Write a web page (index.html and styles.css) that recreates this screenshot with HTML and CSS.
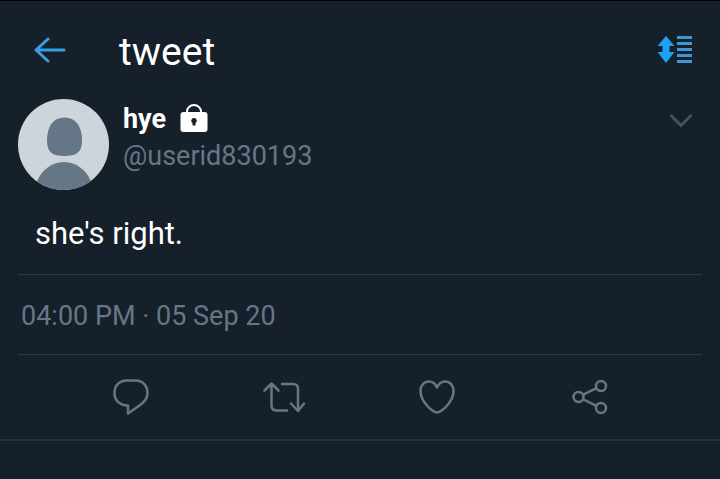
FILE: index.html
```html
<!DOCTYPE html>
<html lang="en">
<head>
    <meta charset="utf-8">
    <title>tweet</title>
    <link rel="stylesheet" href="styles.css">
</head>
<body>
    <header class="topbar">
        <button class="icon-button" aria-label="Back">
            <svg width="32" height="26" viewBox="0 0 32 26" fill="none" stroke="#38a0e3" stroke-width="3" stroke-linecap="round" stroke-linejoin="round">
                <path d="M14 2L2 13l12 11M2 13h28"/>
            </svg>
        </button>
        <h1>tweet</h1>
        <button class="icon-button" aria-label="Sort replies">
            <svg width="36" height="28" viewBox="0 0 36 28">
                <path d="M9 0l8.500 10h-5v6h5L9 27 .5 16h5v-6h-5z" fill="#1da1f2"/>
                <path d="M20 0h15v3H20zM20 6h15v3H20zM20 12h15v3H20zM20 18h15v3H20zM20 24h15v3H20z" fill="#3d97d3"/>
            </svg>
        </button>
    </header>

    <main>
        <article>
            <div class="author">
                <svg class="avatar" width="91" height="91" viewBox="0 0 91 91">
                    <clipPath id="round"><circle cx="45.500" cy="45.500" r="45.500"/></clipPath>
                    <g clip-path="url(#round)">
                        <path d="M0 0h91v91H0z" fill="#ccd6da"/>
                        <path d="M46.500 18.500c11 0 17.500 8.500 17.500 23 0 11.500-5 15.500-17.500 15.500S29 53 29 41.500c0-14.500 6.500-23 17.500-23z" fill="#657786"/>
                        <path d="M17 91c2-17 15-28 29-28s27 11 29 28z" fill="#657786"/>
                    </g>
                </svg>
                <div class="names">
                    <div class="name">
                        <span>hye</span>
                        <svg width="28" height="28" viewBox="0 0 28 28">
                            <path d="M7 9V7.500a7 6.500 0 0 1 14 0V9" fill="none" stroke="#fff" stroke-width="2"/>
                            <rect x="0.500" y="8" width="27" height="20" rx="3" fill="#fff"/>
                            <path d="M14 14a2.700 2.700 0 0 1 1.500 5v2.500h-3V19A2.700 2.700 0 0 1 14 14z" fill="#15202b"/>
                        </svg>
                    </div>
                    <div class="handle">@userid830193</div>
                </div>
                <button class="icon-button more" aria-label="More">
                    <svg width="24" height="16" viewBox="0 0 24 16" fill="none" stroke="#45525c" stroke-width="3">
                        <path d="M1.500 2L12 12.500 22.500 2"/>
                    </svg>
                </button>
            </div>
            <p class="text">she's right.</p>
            <p class="date">04:00 PM · 05 Sep 20</p>
        </article>

        <div class="actions">
            <button class="icon-button" aria-label="Reply">
                <svg width="36" height="36" viewBox="0 0 36 36">
                    <path d="M13.500 1.500h9C30 1.500 34.500 7 34.500 14c0 5-2.500 8.500-7 11.700L15 34.500V26.500C7 26.700 1.500 21.500 1.500 14S6.500 1.500 13.500 1.500z"/>
                </svg>
            </button>
            <button class="icon-button" aria-label="Retweet">
                <svg width="42" height="32" viewBox="0 0 42 32">
                    <path d="M1.500 9.500l7-7 7 7M8.500 2.500V24.500q0 5 5 5H24M19 3h11q5 0 5 5V29.500M28 22.500l7 7.500 6-7.500"/>
                </svg>
            </button>
            <button class="icon-button" aria-label="Like">
                <svg width="36" height="34" viewBox="0 0 36 34">
                    <path d="M18 32.500C13 32 1.500 21.500 1.500 11c0-5.500 3.500-9.500 8.500-9.500 3.700 0 6.500 2.500 8 6 1.500-3.500 4.300-6 8-6 5 0 8.500 4 8.500 9.500C34.500 21.500 23 32 18 32.500z"/>
                </svg>
            </button>
            <button class="icon-button" aria-label="Share">
                <svg width="36" height="36" viewBox="0 0 36 36">
                    <circle cx="6.500" cy="18" r="5"/>
                    <circle cx="29" cy="7" r="5"/>
                    <circle cx="29" cy="29" r="5"/>
                    <path d="M11.500 15.500L24 9.300M11.500 20.500L24 26.700"/>
                </svg>
            </button>
        </div>
    </main>
</body>
</html>
```

FILE: styles.css
```css
body {
    margin: 0;
    background-color: #16202a;
    color: #fff;
    font-family: Roboto, "Liberation Sans", sans-serif;
    font-size: 27px;
    border-top: 1px solid #000;
}

h1,
p {
    margin: 0;
    font-weight: normal;
}

svg {
    display: block;
}

.icon-button {
    padding: 0;
    border: none;
    background: none;
    cursor: pointer;
}

.topbar {
    display: flex;
    align-items: center;
    height: 98px;
    padding: 0 27px 0 34px;
}

.topbar h1 {
    flex: 1;
    margin-left: 53px;
    padding-top: 4px;
    font-size: 39px;
    line-height: 48px;
}

.author {
    display: flex;
    align-items: flex-start;
    padding: 0 27px 0 18px;
}

.names {
    flex: 1;
    margin-left: 14px;
    padding-top: 2px;
    line-height: 37px;
}

.name {
    display: flex;
    gap: 14px;
    font-weight: bold;
}

.name svg {
    margin-top: 3px;
}

.handle,
.date {
    color: #657786;
}

.more {
    margin-top: 14px;
}

.text {
    padding: 26px 35px 22px;
    font-size: 31px;
    line-height: 36px;
}

.date {
    margin: 0 18px;
    padding: 23px 3px 20px;
    line-height: 36px;
    border-top: 1px solid #2d3942;
    border-bottom: 1px solid #2d3942;
}

.actions {
    display: grid;
    grid-template-columns: repeat(4, 1fr);
    justify-items: center;
    align-items: center;
    height: 84px;
    padding: 0 54px;
    border-bottom: 2px solid #27323c;
}

.actions svg {
    fill: none;
    stroke: #657786;
    stroke-width: 2.500;
    stroke-linecap: round;
    stroke-linejoin: round;
}
```
